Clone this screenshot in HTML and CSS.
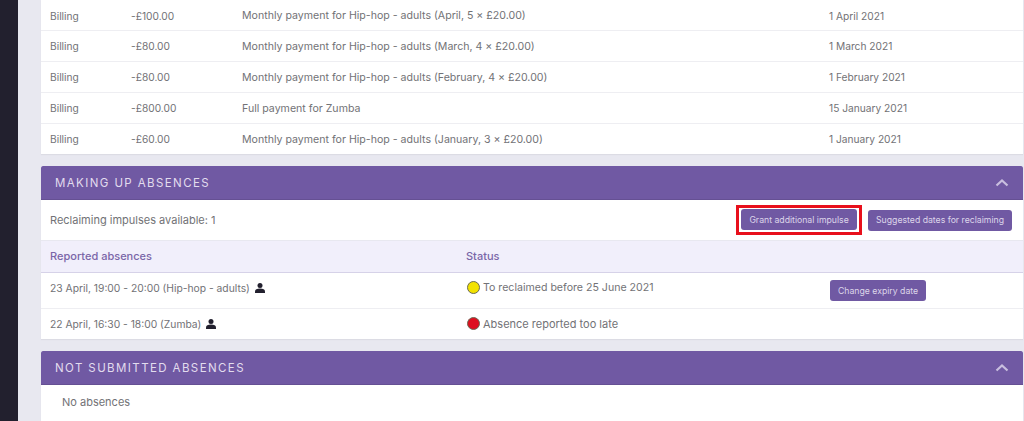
FILE: index.html
```html
<!DOCTYPE html>
<html lang="en">
<head>
<meta charset="utf-8">
<title>Client detail</title>
<link rel="stylesheet" href="styles.css">
</head>
<body>
<div class="page">
  <aside class="sidebar"></aside>
  <main class="main">
    <section class="billing">
      <div class="row bill-row"><span>Billing</span><span>-£100.00</span><span>Monthly payment for Hip-hop - adults (April, 5 × £20.00)</span><span>1 April 2021</span></div>
      <div class="row bill-row"><span>Billing</span><span>-£80.00</span><span>Monthly payment for Hip-hop - adults (March, 4 × £20.00)</span><span>1 March 2021</span></div>
      <div class="row bill-row"><span>Billing</span><span>-£80.00</span><span>Monthly payment for Hip-hop - adults (February, 4 × £20.00)</span><span>1 February 2021</span></div>
      <div class="row bill-row"><span>Billing</span><span>-£800.00</span><span>Full payment for Zumba</span><span>15 January 2021</span></div>
      <div class="row bill-row"><span>Billing</span><span>-£60.00</span><span>Monthly payment for Hip-hop - adults (January, 3 × £20.00)</span><span>1 January 2021</span></div>
    </section>

    <section class="panel panel-making">
      <header class="panel-head">
        <h2>MAKING UP ABSENCES</h2>
        <svg class="chevron" viewBox="0 0 14 9" width="14" height="9"><path d="M1.5 7.5 7 2.5l5.5 5" fill="none" stroke="currentColor" stroke-width="2.2"/></svg>
      </header>
      <div class="toolbar">
        <span>Reclaiming impulses available: 1</span>
        <div class="actions">
          <span class="highlight"><button class="btn btn-grant">Grant additional impulse</button></span>
          <button class="btn">Suggested dates for reclaiming</button>
        </div>
      </div>
      <div class="row abs-head"><span>Reported absences</span><span>Status</span><span></span></div>
      <div class="row abs-row abs-tall">
        <span class="with-icon lesson">23 April, 19:00 - 20:00 (Hip-hop - adults)
          <svg class="person" viewBox="0 0 10 10" width="10" height="10"><circle cx="5" cy="2.6" r="2.5"/><path d="M0 10V8.4C0 6.6 2 5.6 5 5.6s5 1 5 2.8V10z"/></svg>
        </span>
        <span class="with-icon status-long"><i class="dot dot-yellow"></i>To reclaimed before 25 June 2021</span>
        <span class="cell-action"><button class="btn">Change expiry date</button></span>
      </div>
      <div class="row abs-row">
        <span class="with-icon lesson">22 April, 16:30 - 18:00 (Zumba)
          <svg class="person" viewBox="0 0 10 10" width="10" height="10"><circle cx="5" cy="2.6" r="2.5"/><path d="M0 10V8.4C0 6.6 2 5.6 5 5.6s5 1 5 2.8V10z"/></svg>
        </span>
        <span class="with-icon"><i class="dot dot-red"></i>Absence reported too late</span>
        <span></span>
      </div>
    </section>

    <section class="panel panel-missing">
      <header class="panel-head">
        <h2>NOT SUBMITTED ABSENCES</h2>
        <svg class="chevron" viewBox="0 0 14 9" width="14" height="9"><path d="M1.5 7.5 7 2.5l5.5 5" fill="none" stroke="currentColor" stroke-width="2.2"/></svg>
      </header>
      <div class="empty">No absences</div>
    </section>
  </main>
</div>
</body>
</html>
```

FILE: styles.css
```css
* { box-sizing: border-box; }
html, body { margin: 0; height: 100%; overflow: hidden; }
body {
  font-family: "Inter", "Liberation Sans", sans-serif;
  font-size: 11px;
  color: #727276;
  background: #e8e8f0;
}
.page { display: flex; height: 421px; }
.sidebar { flex: 0 0 18px; background: #22202e; }
.main { flex: 1; padding: 0 1px 0 23px; }

.billing { background: #fff; box-shadow: 0 1px 1px #dcdce4; }
.row { display: grid; align-items: center; padding-left: 9px; }
.bill-row {
  grid-template-columns: 81px 111px 587px 1fr;
  height: 31px;
  font-size: 10.2px;
  border-bottom: 1px solid #eeeef2;
}
.bill-row:first-child { padding-top: 1px; }
.bill-row span:nth-child(3) { font-size: 10.6px; }
.bill-row:last-child { border-bottom: 0; height: 30px; }

.panel { background: #fff; box-shadow: 0 1px 1px #dcdce4; }
.panel-making { margin-top: 12px; }
.panel-missing { margin-top: 12px; }
.panel-head {
  height: 34px;
  background: #7059a3;
  border-bottom: 1px solid #655093;
  border-radius: 2px 2px 0 0;
  display: flex;
  align-items: center;
  justify-content: space-between;
  padding: 0 14px;
  color: #c9bfdf;
}
.panel-head h2 {
  margin: 0;
  font-size: 11.5px;
  font-weight: 400;
  letter-spacing: 1.4px;
  color: #e2dcee;
}
.toolbar {
  height: 41px;
  display: flex;
  align-items: center;
  justify-content: space-between;
  padding: 0 11px 0 9px;
  border-bottom: 1px solid #e8e8f0;
}
.actions { display: flex; align-items: center; gap: 6px; }
.highlight { display: block; padding: 1px 2px 2px; border: 3px solid #e8101c; line-height: 0; }
.btn {
  height: 21px;
  padding: 0 8px;
  border: 0;
  border-radius: 3px;
  background: #7059a3;
  color: #ddd6ea;
  font: 400 8.7px "Inter", "Liberation Sans", sans-serif;
}
.btn-grant { width: 116px; padding: 0; }
.abs-head {
  grid-template-columns: 416px 363px 1fr;
  height: 32px;
  padding-bottom: 2px;
  background: #f1effb;
  border-bottom: 1px solid #d6d2e8;
  color: #7a66a8;
  font-weight: 500;
}
.abs-row {
  grid-template-columns: 416px 363px 1fr;
  height: 30px;
}
.abs-row > span { padding-bottom: 1px; }
.abs-tall { height: 36px; border-bottom: 1px solid #eeeef2; }
.abs-tall > span { padding-bottom: 6px; }
.abs-tall > .cell-action { padding: 0 0 0 1px; }
.lesson { font-size: 10.3px; }
.status-long { font-size: 10.6px; }
.with-icon { display: flex; align-items: center; }
.person { margin-left: 5px; fill: #22202e; }
.dot {
  width: 13px;
  height: 13px;
  border-radius: 50%;
  border: 1px solid #6b6a55;
  margin: 0 3px 0 1px;
  flex: none;
}
.dot-yellow { background: #f2e200; }
.dot-red { background: #dd1020; }
.empty { height: 36px; padding: 0 0 2px 21px; display: flex; align-items: center; }
```
